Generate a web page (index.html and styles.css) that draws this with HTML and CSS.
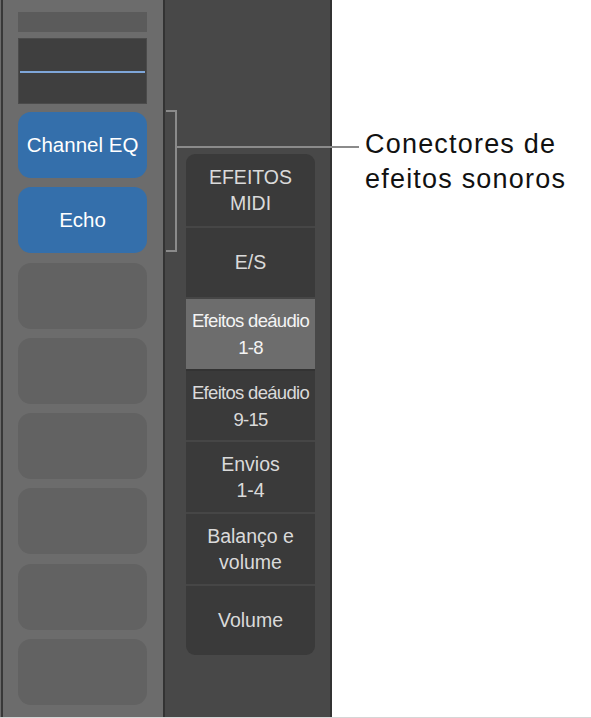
FILE: index.html
```html
<!DOCTYPE html>
<html lang="pt">
<head>
<meta charset="utf-8">
<title>Conectores de efeitos sonoros</title>
<link rel="stylesheet" href="styles.css">
</head>
<body>
<div class="app">
  <div class="strip">
    <div class="topbar"></div>
    <div class="display"><div class="display-line"></div></div>
    <div class="slots">
      <div class="slot plugin">Channel EQ</div>
      <div class="slot plugin">Echo</div>
      <div class="slot"></div>
      <div class="slot"></div>
      <div class="slot"></div>
      <div class="slot"></div>
      <div class="slot"></div>
      <div class="slot"></div>
    </div>
  </div>
  <div class="panel">
    <div class="menu">
      <div class="item caps">EFEITOS<br>MIDI</div>
      <div class="item">E/S</div>
      <div class="item narrow selected">Efeitos deáudio<br>1-8</div>
      <div class="item narrow">Efeitos deáudio<br>9-15</div>
      <div class="item">Envios<br>1-4</div>
      <div class="item">Balanço e<br>volume</div>
      <div class="item">Volume</div>
    </div>
  </div>
  <div class="callout">Conectores de<br>efeitos sonoros</div>
  <div class="bracket"></div>
  <div class="leader"></div>
</div>
</body>
</html>
```
FILE: styles.css
```css
html, body {
  margin: 0;
  padding: 0;
  background: #ffffff;
}
body {
  font-family: "Liberation Sans", Arial, sans-serif;
}
.app {
  position: relative;
  display: flex;
  height: 717px;
  width: 591px;
  border-bottom: 1px solid #d6d6d6;
}
.strip {
  flex: none;
  width: 145px;
  margin-left: 1px;
  box-shadow: -1px 0 0 #6b6b6b;
  background: #6c6c6c;
  border-left: 2px solid #383838;
  border-right: 2px solid #333333;
  padding: 12px 0 0 15px;
  box-sizing: content-box;
}
.strip > * {
  width: 129px;
}
.topbar {
  height: 20px;
  background: #5b5b5b;
}
.display {
  margin-top: 6px;
  height: 64px;
  background: #3f3f3f;
  border: 1px solid #4b4b4b;
  box-sizing: content-box;
  width: 127px;
  display: flex;
  align-items: center;
}
.display-line {
  margin: 1px 1px 0 1px;
  height: 2px;
  width: 126px;
  background: #7ea6d9;
}
.slots {
  margin-top: 8px;
  display: flex;
  flex-direction: column;
  gap: 9.3px;
}
.slot {
  height: 66px;
  border-radius: 13px;
  background: #626262;
}
.plugin {
  background: #346fab;
  color: #ffffff;
  font-size: 20.5px;
  display: flex;
  align-items: center;
  justify-content: center;
}
.panel {
  flex: none;
  width: 167px;
  background: #484848;
  border-right: 2px solid #333333;
  padding: 154px 0 0 21px;
  box-sizing: border-box;
}
.menu {
  width: 129px;
  background: #3a3a3a;
  border-radius: 9px;
  overflow: hidden;
  display: flex;
  flex-direction: column;
}
.item {
  height: 71.6px;
  display: flex;
  align-items: center;
  justify-content: center;
  text-align: center;
  color: #dadada;
  font-size: 19.5px;
  line-height: 26px;
  box-sizing: border-box;
}
.item + .item {
  border-top: 2px solid #464646;
}
.narrow {
  font-size: 18.5px;
  letter-spacing: -0.7px;
  line-height: 27px;
}
.selected {
  background: #6d6d6d;
  color: #f4f4f4;
  border-top-color: #6d6d6d;
}
.selected + .item {
  border-top-color: #333333;
}
.callout {
  padding: 127px 0 0 33px;
  font-size: 27px;
  line-height: 35px;
  letter-spacing: 1.2px;
  color: #111111;
  white-space: nowrap;
}
.bracket {
  position: absolute;
  left: 166px;
  top: 110px;
  width: 9px;
  height: 138px;
  border: 2px solid #8b8b8b;
  border-left: none;
}
.leader {
  position: absolute;
  left: 177px;
  top: 146px;
  width: 182px;
  height: 2px;
  background: #8b8b8b;
}
```
